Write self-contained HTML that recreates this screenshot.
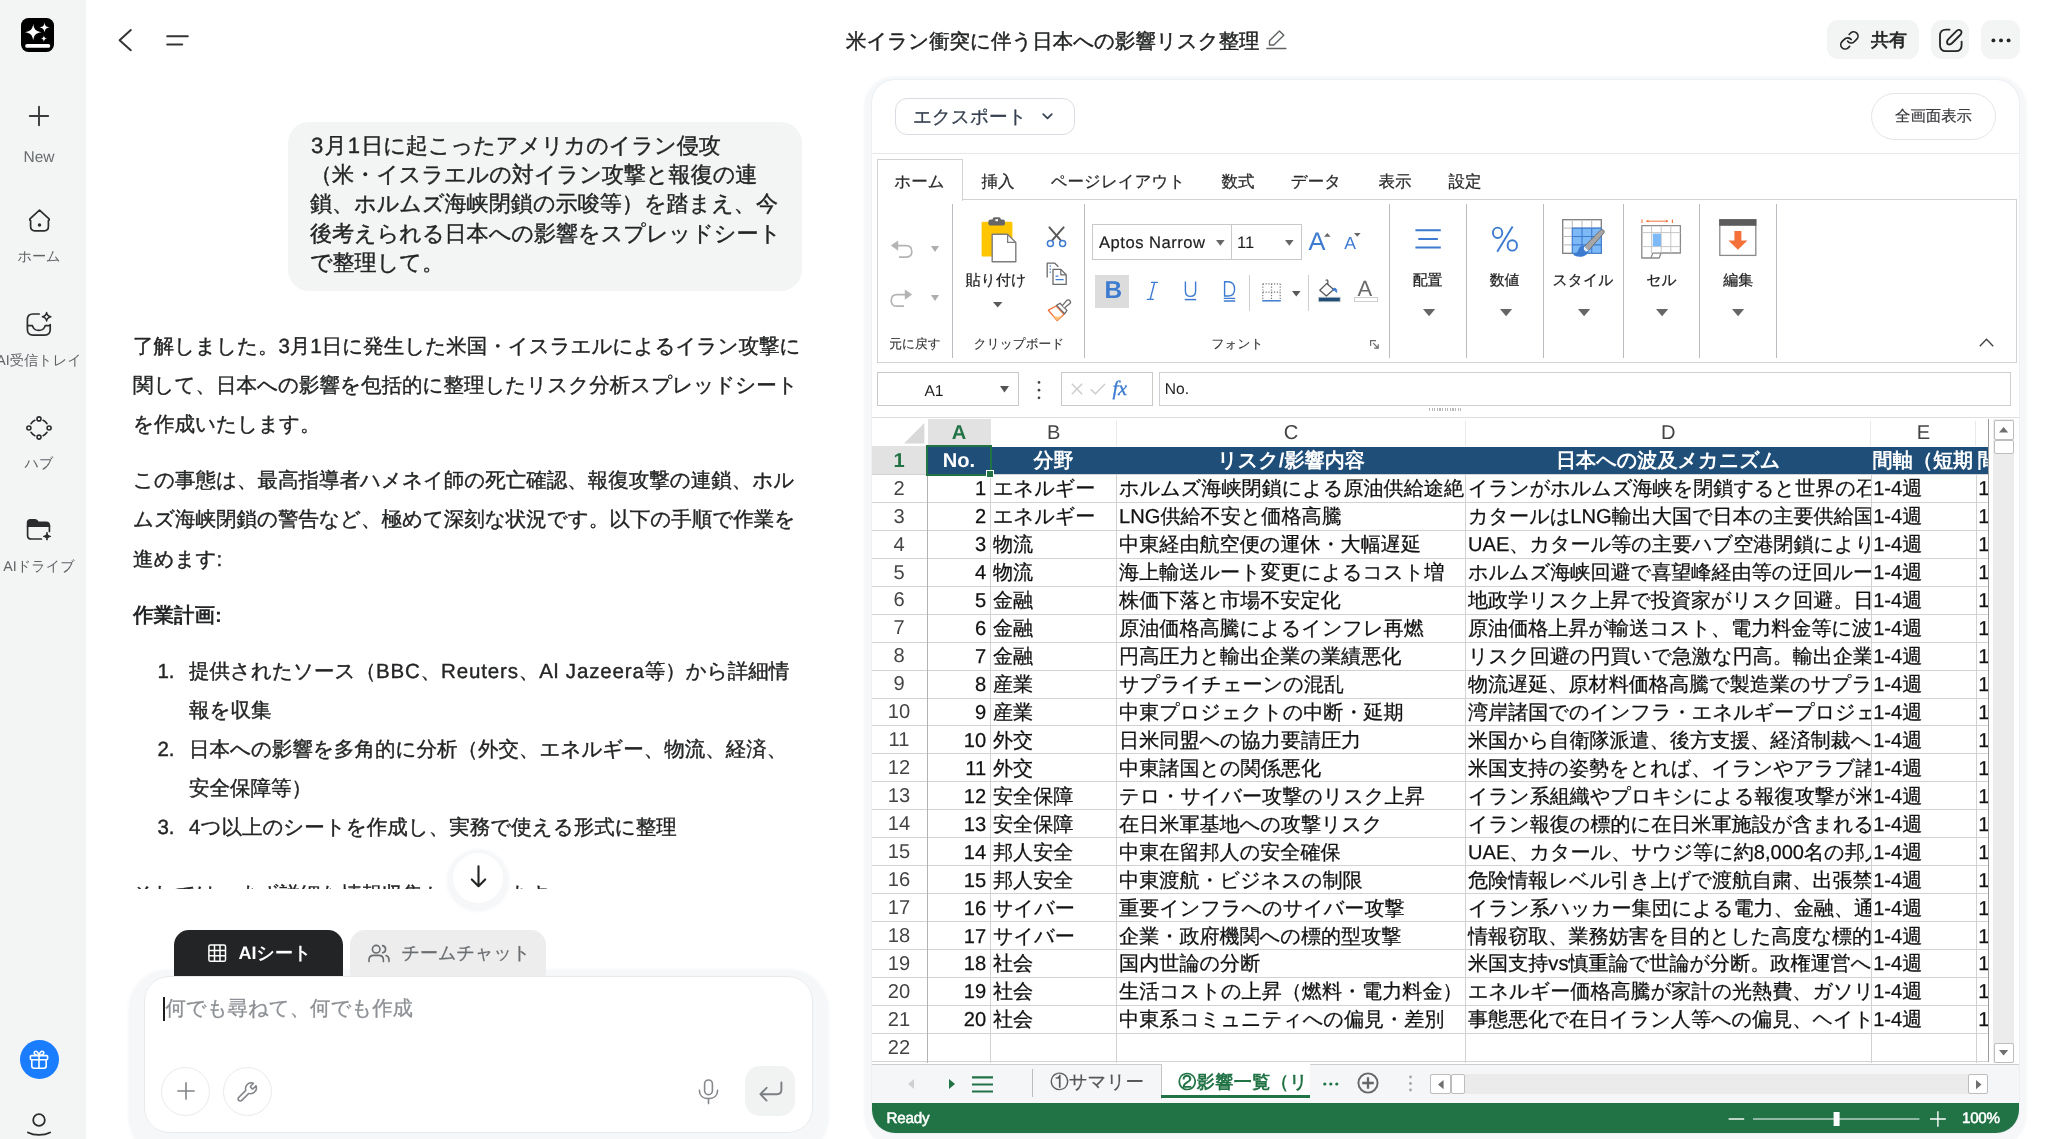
<!DOCTYPE html>
<html lang="ja">
<head>
<meta charset="utf-8">
<title>米イラン衝突に伴う日本への影響リスク整理</title>
<style>
*{box-sizing:border-box;margin:0;padding:0}
html,body{width:2048px;height:1139px;overflow:hidden;background:#fff}
body{font-family:"Liberation Sans",sans-serif;color:#232425;position:relative;-webkit-font-smoothing:antialiased;text-rendering:geometricPrecision}
#app{position:absolute;left:0;top:0;width:2048px;height:1139px;will-change:transform;overflow:hidden}
.abs{position:absolute}
.t{position:absolute;white-space:nowrap;line-height:1}
svg{position:absolute;overflow:visible}
/* sidebar */
#side{position:absolute;left:0;top:0;width:85.6px;height:1139px;background:#f3f4f4}
.slab{position:absolute;left:-24px;width:126px;text-align:center;font-size:14.2px;color:#606366;white-space:nowrap;line-height:18px}
/* chat */
.dg{padding:0 1.15px}
.p,#ub{-webkit-text-stroke:0.38px #232425}
.lt{letter-spacing:0.85px}
.p{position:absolute;font-size:20.5px;line-height:39.1px;white-space:nowrap;color:#232425}
/* sheet */
#card{position:absolute;left:872px;top:80px;width:1147px;height:1053px;border-radius:23px;background:#fff;box-shadow:0 0 0 1px rgba(234,237,241,.8),0 4.5px 2.5px 8px rgba(246,247,249,1);overflow:hidden}
.c{position:absolute;transform:translateX(-50%);white-space:nowrap;line-height:1}
.rt{font-size:16.5px;line-height:20px;top:172px;color:#2a2a2a}
.vs{position:absolute;width:1.4px;background:#b9bdc1;top:204px;height:154px}
.gl{font-size:12.7px;line-height:16px;top:336px;color:#333}
.bl{font-size:14.9px;line-height:18px;top:272px;color:#222}
#title{-webkit-text-stroke:0.45px #232425}
.rt,.bl{-webkit-text-stroke:0.25px currentColor}
.gl{-webkit-text-stroke:0.15px currentColor}
#export{-webkit-text-stroke:0.3px #374151}
#fullscr{-webkit-text-stroke:0.2px #3a3c3f}
#grid{-webkit-text-stroke:0.25px currentColor}
#grid [style*="bold"],#grid .c{-webkit-text-stroke:0}
#teamchat{-webkit-text-stroke:0.25px #6a6d70}
#tab1{-webkit-text-stroke:0.2px #555}
</style>
</head>
<body>
<div id="app">

<!-- ================= SIDEBAR ================= -->
<div id="side">
  <!-- logo -->
  <svg style="left:21px;top:18px" width="33" height="34" viewBox="0 0 33 34">
    <rect x="0" y="0" width="33" height="34" rx="7.5" fill="#000"/>
    <path d="M12.2 5.8 C12.9 11.2 14.6 13.4 20.6 14.2 C14.6 15 12.9 17.2 12.2 22.6 C11.5 17.2 9.8 15 3.8 14.2 C9.8 13.4 11.5 11.2 12.2 5.8Z" fill="#fff"/>
    <path d="M23.5 4.2 C23.9 7.6 24.9 8.8 28.6 9.4 C24.9 10 23.9 11.2 23.5 14.6 C23.1 11.2 22.1 10 18.4 9.4 C22.1 8.8 23.1 7.6 23.5 4.2Z" fill="#fff"/>
    <path d="M22.9 17.2 C23.2 19.4 23.8 20.1 26.2 20.5 C23.8 20.9 23.2 21.6 22.9 23.8 C22.6 21.6 22 20.9 19.6 20.5 C22 20.1 22.6 19.4 22.9 17.2Z" fill="#fff"/>
    <rect x="4.2" y="25.9" width="25" height="3.9" rx="1.9" fill="#fff"/>
  </svg>
  <!-- plus -->
  <svg style="left:29px;top:106px" width="20" height="20" viewBox="0 0 20 20" fill="none" stroke="#3a3b3d" stroke-width="1.9" stroke-linecap="round"><path d="M10 0.8V19.2M0.8 10H19.2"/></svg>
  <div class="slab" style="top:149px;font-size:15.5px;color:#6a6d70">New</div>
  <!-- home -->
  <svg style="left:28px;top:209px" width="23" height="23" viewBox="0 0 23 23" fill="none" stroke="#2b2c2e" stroke-width="1.7" stroke-linejoin="round" stroke-linecap="round">
    <path d="M2.2 9.6 L11.5 1.2 L20.8 9.6 C21.6 10.4 21.3 11.3 20.4 11.6 V17.6 C20.4 20.2 18.8 21.8 16.2 21.8 H6.8 C4.2 21.8 2.6 20.2 2.6 17.6 V11.6 C1.7 11.3 1.4 10.4 2.2 9.6Z"/>
    <circle cx="11.5" cy="16" r="0.9" fill="#2b2c2e"/>
  </svg>
  <div class="slab" style="top:248px">ホーム</div>
  <!-- inbox -->
  <svg style="left:26px;top:312px" width="26" height="25" viewBox="0 0 26 25" fill="none" stroke="#2b2c2e" stroke-width="1.7" stroke-linejoin="round" stroke-linecap="round">
    <path d="M13.2 2 H7 C3.4 2 1.4 4 1.4 7.6 V17.6 C1.4 21.2 3.4 23.2 7 23.2 H18.6 C22.2 23.2 24.2 21.2 24.2 17.6 V12.6"/>
    <path d="M1.6 13.6 H6.4 C7.2 16.6 9.4 18.4 12.8 18.4 C16.2 18.4 18.4 16.6 19.2 13.6 H24"/>
    <path d="M20.6 0.6 C21 3.4 21.8 4.2 24.8 4.8 C21.8 5.4 21 6.2 20.6 9 C20.2 6.2 19.4 5.4 16.4 4.8 C19.4 4.2 20.2 3.4 20.6 0.6Z" stroke-width="1.5"/>
  </svg>
  <div class="slab" style="top:352px">AI受信トレイ</div>
  <!-- hub -->
  <svg style="left:26.4px;top:415.6px" width="26" height="24" viewBox="0 0 26 24" fill="none" stroke="#2b2c2e" stroke-width="1.6" stroke-linecap="round">
    <circle cx="13" cy="2.9" r="2"/><circle cx="13" cy="21.1" r="2"/><circle cx="2.9" cy="12" r="2"/><circle cx="23.1" cy="12" r="2"/>
    <path d="M8.9 4.3 C7.3 5.1 6 6.2 5 7.7M17.1 4.3 C18.7 5.1 20 6.2 21 7.7M5 16.3 C6 17.8 7.3 18.9 8.9 19.7M21 16.3 C20 17.8 18.7 18.9 17.1 19.7"/>
  </svg>
  <div class="slab" style="top:455px">ハブ</div>
  <!-- drive -->
  <svg style="left:26px;top:518px" width="26" height="24" viewBox="0 0 26 24" fill="none" stroke="#2b2c2e" stroke-width="1.7" stroke-linejoin="round" stroke-linecap="round">
    <path d="M1.6 6.2 V4.6 C1.6 2.8 2.6 1.8 4.4 1.8 H9 C10 1.8 10.6 2.2 11.2 3 L12.2 4.4 H20 C22.2 4.4 23.4 5.6 23.4 7.8 V8.2 H1.6Z" fill="#2b2c2e"/>
    <path d="M1.6 8 V17.4 C1.6 19.8 2.8 21 5.2 21 H15.4M23.4 8 V13.4"/>
    <path d="M21 14.6 C21.4 17.2 22 17.8 24.8 18.4 C22 19 21.4 19.6 21 22.2 C20.6 19.6 20 19 17.2 18.4 C20 17.8 20.6 17.2 21 14.6Z" fill="#2b2c2e" stroke-width="1"/>
  </svg>
  <div class="slab" style="top:558px">AIドライブ</div>
  <!-- gift -->
  <div class="abs" style="left:19.8px;top:1039.9px;width:39px;height:39px;border-radius:50%;background:#1a7dff"></div>
  <svg style="left:29px;top:1048.8px" width="20" height="21" viewBox="0 0 20 21" fill="none" stroke="#fff" stroke-width="1.6" stroke-linejoin="round" stroke-linecap="round">
    <rect x="1.4" y="6.6" width="17.2" height="4.2" rx="1"/>
    <path d="M2.8 10.8 V16.8 C2.8 18.4 3.6 19.2 5.2 19.2 H14.8 C16.4 19.2 17.2 18.4 17.2 16.8 V10.8M10 6.6 V19.2"/>
    <path d="M10 6.4 C8.6 6.4 5.2 6.2 5.2 3.8 C5.2 1.6 8.6 1.2 10 6.4 C11.4 1.2 14.8 1.6 14.8 3.8 C14.8 6.2 11.4 6.4 10 6.4Z"/>
  </svg>
  <!-- user -->
  <svg style="left:27px;top:1112px" width="24" height="27" viewBox="0 0 24 27" fill="none" stroke="#2b2c2e" stroke-width="1.8" stroke-linecap="round">
    <circle cx="12" cy="8" r="5.8"/><path d="M0.9 20.5 C7 23.7 17 23.7 23.1 20.5"/>
  </svg>
</div>

<!-- ================= CHAT HEADER ================= -->
<svg style="left:118px;top:29px" width="14" height="22" viewBox="0 0 14 22" fill="none" stroke="#333435" stroke-width="2" stroke-linecap="round" stroke-linejoin="round"><path d="M12.8 1 L1.6 11.2 L12.8 21.2"/></svg>
<svg style="left:166px;top:35px" width="23" height="11" viewBox="0 0 23 11" fill="none" stroke="#333435" stroke-width="2" stroke-linecap="round"><path d="M1.2 1.3 H21.8M1.2 9.5 H16.2"/></svg>

<!-- user bubble -->
<div class="abs" style="left:288px;top:121.6px;width:514px;height:169px;border-radius:21px;background:#f3f4f4"></div>
<div class="abs ub" style="left:309.9px;top:130.7px;font-size:22.1px;line-height:29.3px;white-space:nowrap;color:#232425" id="ub"><span class="dg">3</span>月<span class="dg">1</span>日に起こったアメリカのイラン侵攻<br>（米・イスラエルの対イラン攻撃と報復の連<br>鎖、ホルムズ海峡閉鎖の示唆等）を踏まえ、今<br>後考えられる日本への影響をスプレッドシート<br>で整理して。</div>
<!-- assistant text -->
<div id="scroll" style="position:absolute;left:100px;top:300px;width:740px;height:589.4px;overflow:hidden">
<div class="p" style="left:33px;top:26.6px" id="p1">了解しました。3月1日に発生した米国・イスラエルによるイラン攻撃に<br>関して、日本への影響を包括的に整理したリスク分析スプレッドシート<br>を作成いたします。</div>
<div class="p" style="left:33px;top:161.4px" id="p2">この事態は、最高指導者ハメネイ師の死亡確認、報復攻撃の連鎖、ホル<br>ムズ海峡閉鎖の警告など、極めて深刻な状況です。以下の手順で作業を<br>進めます:</div>
<div class="p" style="left:33px;top:295.6px;font-weight:bold;-webkit-text-stroke:0" id="h1">作業計画:</div>
<div class="p" style="left:57.4px;top:351.7px">1.<br><br>2.<br><br>3.</div>
<div class="p" style="left:89px;top:351.7px" id="ol">提供されたソース（<span class="lt">BBC</span>、<span class="lt">Reuters</span>、<span class="lt">Al Jazeera</span>等）から詳細情<br>報を収集<br>日本への影響を多角的に分析（外交、エネルギー、物流、経済、<br>安全保障等）<br>4つ以上のシートを作成し、実務で使える形式に整理</div>
<div class="p" style="left:33px;top:574.8px" id="p3">それでは、まず詳細な情報収集から始めます。</div>
</div>
<!-- scroll-down button -->
<div class="abs" style="left:453px;top:852.6px;width:50px;height:50px;border-radius:50%;background:#fff;box-shadow:0 2.5px 3px 6.5px rgba(246,247,249,1)"></div>
<svg style="left:469.6px;top:865.4px" width="17" height="23" viewBox="0 0 17 23" fill="none" stroke="#232425" stroke-width="2.1" stroke-linecap="round" stroke-linejoin="round"><path d="M8.5 1.2 V21M1.8 14.4 L8.5 21.2 L15.2 14.4"/></svg>


<div class="abs" style="left:143.6px;top:976.2px;width:669.2px;height:157.2px;border-radius:25px;box-shadow:0 9px 3px 15.5px rgba(246,247,249,1)"></div>
<!-- input tabs -->
<div class="abs" style="left:174.4px;top:930px;width:168.6px;height:60px;border-radius:15px 15px 0 0;background:#232425"></div>
<svg style="left:207.6px;top:944.2px" width="18.4" height="18.2" viewBox="0 0 18.4 18.2" fill="none" stroke="#fff" stroke-width="1.5"><rect x="0.9" y="0.9" width="16.6" height="16.4" rx="1.6"/><path d="M0.9 6.4 H17.5M0.9 11.8 H17.5M6.5 0.9 V17.3M12 0.9 V17.3"/></svg>
<div class="t" style="left:238.6px;top:943.4px;font-size:18px;line-height:20px;color:#fff;font-weight:bold" id="aisheet">AIシート</div>
<div class="abs" style="left:349.6px;top:930px;width:196.2px;height:60px;border-radius:15px 15px 0 0;background:#ededed"></div>
<svg style="left:368.4px;top:944px" width="22" height="19" viewBox="0 0 22 19" fill="none" stroke="#6a6d70" stroke-width="1.6" stroke-linecap="round" stroke-linejoin="round">
  <circle cx="8.2" cy="5.2" r="3.8"/><path d="M1 17.6 V15.8 C1 13 3 11.4 5.8 11.4 H10.6 C13.4 11.4 15.4 13 15.4 15.8 V17.6"/>
  <path d="M14.6 1.6 C16.4 2 17.6 3.4 17.6 5.2 C17.6 7 16.4 8.4 14.6 8.8M21 17.6 V15.8 C21 13.6 19.8 12.2 18 11.6"/>
</svg>
<div class="t" style="left:401.4px;top:943.4px;font-size:18.1px;line-height:20px;color:#6a6d70" id="teamchat">チームチャット</div>
<!-- input box -->
<div class="abs" style="left:143.6px;top:976.2px;width:669.2px;height:157.2px;border-radius:25px;background:#fff;border:1px solid #e7e9ec"></div>
<div class="abs" style="left:163px;top:997px;width:2.2px;height:24.4px;background:#1c1d1e"></div>
<div class="t" style="left:165.4px;top:997.4px;font-size:20.4px;line-height:24px;color:#8d9094;-webkit-text-stroke:0.3px #8d9094" id="ph">何でも尋ねて、何でも作成</div>
<div class="abs" style="left:161.4px;top:1066.8px;width:49px;height:49px;border-radius:50%;border:1px solid #e9eaec;background:#fff"></div>
<svg style="left:176.8px;top:1082.2px" width="18" height="18" viewBox="0 0 18 18" fill="none" stroke="#808387" stroke-width="1.6" stroke-linecap="round"><path d="M9 0.9 V17.1M0.9 9 H17.1"/></svg>
<div class="abs" style="left:223px;top:1066.8px;width:49px;height:49px;border-radius:50%;border:1px solid #e9eaec;background:#fff"></div>
<svg style="left:237.4px;top:1080.8px" width="21" height="21" viewBox="0 0 21 21" fill="none" stroke="#808387" stroke-width="1.5" stroke-linecap="round" stroke-linejoin="round">
  <path d="M13.6 5.2 C13.4 5.6 13.4 6 13.8 6.4 L15 7.6 C15.4 8 15.8 8 16.2 7.6 L19 4.8 C19.8 7 19.4 9.4 17.6 11 C16 12.6 13.8 13 11.8 12.4 L4.8 19.4 C4 20.2 2.6 20.2 1.8 19.4 C1 18.6 1 17.2 1.8 16.4 L8.8 9.4 C8.2 7.4 8.6 5.2 10.2 3.6 C11.8 1.8 14.2 1.4 16.4 2.2 Z"/>
</svg>
<svg style="left:698.4px;top:1078.6px" width="21" height="26" viewBox="0 0 21 26" fill="none" stroke="#85888c" stroke-width="1.6" stroke-linecap="round" stroke-linejoin="round">
  <rect x="6.6" y="1" width="7.8" height="14.6" rx="3.9"/><path d="M1.4 11.4 C1.4 16.4 5 19.6 10.5 19.6 C16 19.6 19.6 16.4 19.6 11.4M10.5 19.8 V24.6"/>
</svg>
<div class="abs" style="left:745px;top:1066.4px;width:50px;height:50px;border-radius:15px;background:#f1f2f2"></div>
<svg style="left:758.6px;top:1081.4px" width="24" height="21" viewBox="0 0 24 21" fill="none" stroke="#7b7e82" stroke-width="1.9" stroke-linecap="round" stroke-linejoin="round"><path d="M22.4 1.4 V8.8 C22.4 11.6 20.8 13.2 18 13.2 H2M7.6 6.8 L1.4 13.2 L7.6 19.6"/></svg>


<!-- ================= RIGHT HEADER ================= -->
<div class="t" style="left:846px;top:29.8px;font-size:20.45px;line-height:24px;color:#232425;letter-spacing:0px" id="title">米イラン衝突に伴う日本への影響リスク整理</div>
<svg style="left:1266px;top:30px" width="21" height="20" viewBox="0 0 21 20" fill="none" stroke="#5f6265" stroke-width="1.4" stroke-linejoin="round" stroke-linecap="round">
  <path d="M13.4 1 L17.8 5.3 L7.8 15 H3.5 V10.8 Z"/><path d="M0.9 18.4 H19.8" stroke-width="1.5"/>
</svg>
<div class="abs" style="left:1827px;top:20px;width:92px;height:39px;border-radius:11px;background:#f3f4f4"></div>
<svg style="left:1839px;top:30.2px" width="20.8" height="20.8" viewBox="0 0 24 24" fill="none" stroke="#232425" stroke-width="1.95" stroke-linecap="round" stroke-linejoin="round"><path d="M10 13a5 5 0 0 0 7.54.54l3-3a5 5 0 0 0-7.07-7.07l-1.72 1.71"/><path d="M14 11a5 5 0 0 0-7.54-.54l-3 3a5 5 0 0 0 7.07 7.07l1.71-1.71"/></svg>
<div class="t" style="left:1871px;top:30.4px;font-size:18px;line-height:20px;color:#232425;-webkit-text-stroke:0.7px #232425">共有</div>
<div class="abs" style="left:1931px;top:20px;width:38.4px;height:39px;border-radius:11px;background:#f3f4f4"></div>
<svg style="left:1937.8px;top:27.4px" width="26" height="26" viewBox="0 0 26 26" fill="none" stroke="#232425" stroke-width="1.8" stroke-linecap="round" stroke-linejoin="round">
  <path d="M11.6 2.6 H8 C4.2 2.6 2 4.8 2 8.6 V18.2 C2 22 4.2 24.2 8 24.2 H17.6 C21.4 24.2 23.6 22 23.6 18.2 V14.6"/>
  <path d="M9.6 17 C8.6 15.4 9.2 13.4 10.4 12.2 L18.4 4.2 C19.8 2.8 21.6 2.4 22.8 3.6 C24 4.8 23.6 6.6 22.2 8 L14.2 16 C13 17.2 11 17.8 9.6 17Z"/>
</svg>
<div class="abs" style="left:1981px;top:20px;width:39px;height:39px;border-radius:11px;background:#f3f4f4"></div>
<svg style="left:1991px;top:37px" width="20" height="6" viewBox="0 0 20 6"><circle cx="2.4" cy="3.4" r="1.95" fill="#232425"/><circle cx="10" cy="3.4" r="1.95" fill="#232425"/><circle cx="17.6" cy="3.4" r="1.95" fill="#232425"/></svg>


<!-- ================= SHEET CARD ================= -->
<div id="card"><div id="cw" style="position:absolute;left:-872px;top:-80px;width:2048px;height:1139px">
<!-- card top -->
<div class="abs" style="left:895px;top:98px;width:180px;height:37px;border:1px solid #d9dde3;border-radius:12px"></div>
<div class="t" style="left:913px;top:107px;font-size:18.6px;line-height:20px;color:#374151" id="export">エクスポート</div>
<svg style="left:1042px;top:113px" width="11" height="7" viewBox="0 0 11 7" fill="none" stroke="#374151" stroke-width="1.7" stroke-linecap="round" stroke-linejoin="round"><path d="M1.2 1.2 L5.5 5.4 L9.8 1.2"/></svg>
<div class="abs" style="left:1871px;top:93px;width:125px;height:47px;border:1px solid #e2e4e7;border-radius:24px"></div>
<div class="t" style="left:1895px;top:109px;font-size:15.4px;line-height:16px;color:#3a3c3f" id="fullscr">全画面表示</div>
<div class="abs" style="left:872px;top:153px;width:1147px;height:1px;background:#e6e8eb"></div>
<!-- ribbon tabs -->
<div class="abs" style="left:876.6px;top:158.9px;width:86.2px;height:41.7px;border:1.2px solid #d2d2d2;border-bottom:none;background:#fff"></div>
<div class="abs" style="left:961.6px;top:198.6px;width:1055px;height:1.2px;background:#d2d2d2"></div>
<div class="abs" style="left:876.6px;top:199px;width:1.2px;height:164px;background:#d2d2d2"></div>
<div class="abs" style="left:876.6px;top:361.8px;width:1140.2px;height:1.2px;background:#d2d2d2"></div>
<div class="abs" style="left:2015.6px;top:199px;width:1.2px;height:164px;background:#d2d2d2"></div>
<div class="c rt" style="left:919.5px">ホーム</div>
<div class="c rt" style="left:998px">挿入</div>
<div class="c rt" style="left:1118px">ページレイアウト</div>
<div class="c rt" style="left:1238px">数式</div>
<div class="c rt" style="left:1316px">データ</div>
<div class="c rt" style="left:1395px">表示</div>
<div class="c rt" style="left:1465px">設定</div>
<!-- group separators -->
<div class="vs" style="left:952px"></div><div class="vs" style="left:1084px"></div><div class="vs" style="left:1389px"></div>
<div class="vs" style="left:1466px"></div><div class="vs" style="left:1542.6px"></div><div class="vs" style="left:1622.5px"></div>
<div class="vs" style="left:1699px"></div><div class="vs" style="left:1776px"></div>
<!-- undo group -->
<svg style="left:890px;top:238px" width="24" height="21" viewBox="0 0 24 21" fill="none" stroke="#b4b4b4" stroke-width="1.7"><path d="M7 7.6 H16 C19.6 7.6 21.8 9.8 21.8 13.4 C21.8 17 19.6 19.2 16 19.2 H9"/><path d="M0.8 7.6 L8.2 2.4 V12.8Z" fill="#b4b4b4" stroke="none"/></svg>
<svg style="left:930.6px;top:246.4px" width="8" height="6" viewBox="0 0 8 6"><path d="M0 0 H8 L4 6Z" fill="#adadad"/></svg>
<svg style="left:889px;top:287px" width="24" height="21" viewBox="0 0 24 21" fill="none" stroke="#b4b4b4" stroke-width="1.7"><path d="M17 7.6 H8 C4.4 7.6 2.2 9.8 2.2 13.4 C2.2 17 4.4 19.2 8 19.2 H15"/><path d="M23.2 7.6 L15.8 2.4 V12.8Z" fill="#b4b4b4" stroke="none"/></svg>
<svg style="left:930.6px;top:295.4px" width="8" height="6" viewBox="0 0 8 6"><path d="M0 0 H8 L4 6Z" fill="#adadad"/></svg>
<div class="c gl" style="left:915px">元に戻す</div>
<!-- clipboard group -->
<svg style="left:980px;top:216px" width="38" height="48" viewBox="0 0 38 48">
  <rect x="1.6" y="5.8" width="30.8" height="34.6" rx="1.2" fill="#ffc600"/>
  <rect x="8.4" y="3.6" width="16.6" height="6" rx="2.2" fill="#666"/><rect x="12.6" y="1.2" width="8.2" height="5" rx="2" fill="#666"/><rect x="15.4" y="3.2" width="2.6" height="2" fill="#fff"/>
  <path d="M12.2 18.2 H27.6 L35.8 26.4 V45.8 H12.2Z" fill="#fff" stroke="#7d7d7d" stroke-width="1.4" stroke-linejoin="round"/>
  <path d="M27.6 18.4 V26.4 H35.6" fill="none" stroke="#7d7d7d" stroke-width="1.3"/>
</svg>
<div class="c bl" style="left:996px">貼り付け</div>
<svg style="left:992.8px;top:302px" width="9.4" height="5.6" viewBox="0 0 9.4 5.6"><path d="M0 0 H9.4 L4.7 5.6Z" fill="#595959"/></svg>
<!-- scissors -->
<svg style="left:1046px;top:226px" width="21" height="22" viewBox="0 0 21 22" fill="none">
  <path d="M3.4 1.4 L14.6 14.2M17.6 1.4 L6.4 14.2" stroke="#5a5a5a" stroke-width="2" stroke-linecap="round"/>
  <circle cx="4.4" cy="17.4" r="3" stroke="#3c7bd0" stroke-width="1.5"/><circle cx="16.6" cy="17.4" r="3" stroke="#3c7bd0" stroke-width="1.5"/>
</svg>
<!-- copy -->
<svg style="left:1045.5px;top:261.5px" width="22" height="24" viewBox="0 0 22 24" fill="none" stroke-linejoin="round">
  <path d="M1.2 15.6 V1.2 H8.8 L12.4 4.8" stroke="#6b6b6b" stroke-width="1.3"/>
  <path d="M3.6 4.2 H5M3.6 7.2 H5M3.6 10.2 H5" stroke="#3c7bd0" stroke-width="1.2"/>
  <path d="M7 7.4 H14.8 L20.2 12.8 V22.4 H7Z" fill="#fff" stroke="#6b6b6b" stroke-width="1.3"/>
  <path d="M14.8 7.6 V12.8 H20" stroke="#6b6b6b" stroke-width="1.2"/>
  <path d="M9.6 14.2 H12.4M9.6 17.6 H17.6" stroke="#3c7bd0" stroke-width="1.3"/>
</svg>
<!-- format painter -->
<svg style="left:1047px;top:299px" width="25" height="23" viewBox="0 0 25 23" fill="none" stroke-linejoin="round">
  <path d="M1.4 11.2 L9.2 7 L17 15.2 L10.2 21.6 Z" fill="#fff" stroke="#f0733c" stroke-width="1.4"/>
  <path d="M5.4 16 L10.2 21.4 L15.6 16.4 C12 18.2 8.4 18 5.4 16Z" fill="#ffc27a" stroke="none"/>
  <path d="M9.6 6.4 L13 4.2 L20 11.4 L17.6 14.8Z" fill="#fff" stroke="#6b6b6b" stroke-width="1.3"/>
  <path d="M15.4 6.6 L19.6 1.6 C20.6 0.6 22.2 0.8 23 1.8 C23.8 2.8 23.6 4 22.6 4.8 L17.6 8.8" fill="#fff" stroke="#6b6b6b" stroke-width="1.3"/>
</svg>
<div class="c gl" style="left:1019px">クリップボード</div>
<!-- font group -->
<div class="abs" style="left:1092px;top:224.4px;width:210.4px;height:36px;border:1.4px solid #c9c9c9;background:#fff"></div>
<div class="abs" style="left:1230.6px;top:224.4px;width:1.4px;height:36px;background:#c9c9c9"></div>
<div class="t" style="left:1099px;top:233px;font-size:16.6px;line-height:20px;color:#1e1e1e;letter-spacing:0.5px;-webkit-text-stroke:0.2px #1e1e1e" id="fname">Aptos Narrow</div>
<svg style="left:1216.4px;top:240.4px" width="8.6" height="5.8" viewBox="0 0 8.6 5.8"><path d="M0 0 H8.6 L4.3 5.8Z" fill="#666"/></svg>
<div class="t" style="left:1237px;top:233px;font-size:16.6px;line-height:20px;color:#1e1e1e" id="fsize">11</div>
<svg style="left:1284.8px;top:240.4px" width="8.6" height="5.8" viewBox="0 0 8.6 5.8"><path d="M0 0 H8.6 L4.3 5.8Z" fill="#666"/></svg>
<div class="t" style="left:1308.6px;top:227px;font-size:25.4px;line-height:30px;color:#3c7bd0" id="growA">A</div>
<svg style="left:1323.6px;top:233px" width="6.6" height="3.8" viewBox="0 0 6.6 3.8"><path d="M0 3.8 H6.6 L3.3 0Z" fill="#666"/></svg>
<div class="t" style="left:1344.2px;top:232.4px;font-size:17.6px;line-height:22px;color:#3c7bd0" id="shrinkA">A</div>
<svg style="left:1354.4px;top:232.8px" width="6.6" height="3.8" viewBox="0 0 6.6 3.8"><path d="M0 0 H6.6 L3.3 3.8Z" fill="#666"/></svg>
<div class="abs" style="left:1095.4px;top:274.8px;width:33.4px;height:33px;background:#dcdcdc"></div>
<div class="t" style="left:1104.6px;top:276.4px;font-size:24.4px;line-height:30px;color:#3c7bd0;font-weight:bold" id="boldB">B</div>
<svg style="left:1146px;top:281px" width="13" height="20" viewBox="0 0 13 20" fill="none" stroke="#3c7bd0" stroke-width="1.4" stroke-linecap="round"><path d="M8.6 1.4 L4.2 18.4M5.6 1.4 H11.4M1.4 18.4 H7.2"/></svg>
<svg style="left:1184px;top:281px" width="13" height="20" viewBox="0 0 13 20" fill="none" stroke="#3c7bd0" stroke-width="1.4"><path d="M1.4 0.6 V10 C1.4 13.6 3.2 15.4 6.5 15.4 C9.8 15.4 11.6 13.6 11.6 10 V0.6"/><path d="M0.8 18.6 H12.2" stroke-width="1.5"/></svg>
<svg style="left:1223px;top:281px" width="13" height="21" viewBox="0 0 13 21" fill="none" stroke="#3c7bd0" stroke-width="1.4"><path d="M1.6 0.8 V15 H5 C9.4 15 11.6 12.4 11.6 7.9 C11.6 3.4 9.4 0.8 5 0.8Z"/><path d="M0.8 17.4 H12.2M0.8 20 H12.2" stroke-width="1.3"/></svg>
<div class="abs" style="left:1249.2px;top:274.8px;width:1.3px;height:36px;background:#cfcfcf"></div>
<svg style="left:1261.6px;top:282.6px" width="19" height="19" viewBox="0 0 19 19" fill="none"><path d="M0.8 0.8 H18.2 M0.8 9.2 H18.2 M0.8 0.8 V17 M9.5 0.8 V17 M18.2 0.8 V17" stroke="#7a7a7a" stroke-width="1.2" stroke-dasharray="1.2 1.6"/><path d="M0.2 17.8 H18.8" stroke="#3c7bd0" stroke-width="1.5"/></svg>
<svg style="left:1291.6px;top:290.6px" width="8.6" height="5.6" viewBox="0 0 8.6 5.6"><path d="M0 0 H8.6 L4.3 5.6Z" fill="#595959"/></svg>
<div class="abs" style="left:1307.9px;top:274.8px;width:1.3px;height:36px;background:#cfcfcf"></div>
<svg style="left:1318px;top:279px" width="23" height="24" viewBox="0 0 23 24" fill="none">
  <path d="M8 1.8 C8 0.6 9.8 0.6 9.8 1.8 V8.6" stroke="#5a5a5a" stroke-width="1.3"/>
  <path d="M8.8 4.4 L1.8 11.2 L8.4 17 L15.6 10.6 Z" fill="#fff" stroke="#5a5a5a" stroke-width="1.3" stroke-linejoin="round"/>
  <path d="M15.4 9.6 C17.6 8.6 19.2 10.2 18.6 13.4 C17.4 11.6 16.4 11.2 14.6 11.4Z" fill="#3c7bd0" stroke="#3c7bd0" stroke-width="1"/>
  <rect x="0.6" y="18.2" width="21.6" height="4.6" fill="#1f4e79" stroke="#d0d0d0" stroke-width="0.8"/>
</svg>
<div class="t" style="left:1357.6px;top:274.6px;font-size:22px;line-height:28px;color:#6a6a6a" id="fcolA">A</div>
<div class="abs" style="left:1354.2px;top:296.6px;width:23.4px;height:5.4px;background:#fff;border:1px solid #cfcfcf"></div>
<div class="c gl" style="left:1237.6px">フォント</div>
<svg style="left:1370.4px;top:339.8px" width="9" height="9" viewBox="0 0 9 9" fill="none" stroke="#6a6a6a" stroke-width="1.2"><path d="M0.6 6 V0.6 H6"/><path d="M3.2 3.2 L8 8M8.2 4.2 V8.2 H4.2" /></svg>
<!-- big groups -->
<svg style="left:1415px;top:229px" width="27" height="20" viewBox="0 0 27 20" stroke="#3c7bd0" stroke-width="2"><path d="M0.4 1.3 H25.8M3.3 10 H22.9M0.4 18.5 H25.8"/></svg>
<div class="c bl" style="left:1427.6px">配置</div>
<svg class="ba" style="left:1422.6px;top:309.4px" width="12.2" height="7.2" viewBox="0 0 12.2 7.2"><path d="M0 0 H12.2 L6.1 7.2Z" fill="#666"/></svg>
<svg style="left:1490px;top:225px" width="30" height="29" viewBox="0 0 30 29" fill="none" stroke="#3c7bd0" stroke-width="1.9"><ellipse cx="7.6" cy="7.8" rx="4.7" ry="5.2"/><ellipse cx="22.3" cy="20.4" rx="4.7" ry="5.2"/><path d="M22.6 1.6 L7.2 26.8"/></svg>
<div class="c bl" style="left:1504.6px">数値</div>
<svg class="ba" style="left:1499.6px;top:309.4px" width="12.2" height="7.2" viewBox="0 0 12.2 7.2"><path d="M0 0 H12.2 L6.1 7.2Z" fill="#666"/></svg>
<!-- style icon -->
<svg style="left:1561.6px;top:219px" width="44" height="40" viewBox="0 0 44 40" fill="none">
  <rect x="0.7" y="0.7" width="38.6" height="33.6" fill="#fff" stroke="#7d7d7d" stroke-width="1.3"/>
  <path d="M10.3 0.7 V34.3M20 0.7 V34.3M29.7 0.7 V34.3M0.7 9.1 H39.3M0.7 17.5 H39.3M0.7 25.9 H39.3" stroke="#b9b9b9" stroke-width="1"/>
  <rect x="10.3" y="9.1" width="29" height="25.2" fill="#7db9f7"/>
  <path d="M20 9.1 V34.3M29.7 9.1 V34.3M10.3 17.5 H39.3M10.3 25.9 H39.3M10.3 9.1 H39.3V34.3H10.3Z" stroke="#3c7bd0" stroke-width="1.1"/>
  <path d="M41.6 11.2 C42.6 12.2 42.2 13.6 41.2 14.8 L26.6 31.6 L22.2 27.6 L37.8 11.8 C39 10.6 40.6 10.2 41.6 11.2Z" fill="#a6a6a6" stroke="#6f6f6f" stroke-width="1"/>
  <path d="M22.4 27.2 C20 26 17.4 27.4 16.6 30.2 C15.8 33 13.6 35 10.8 35.6 C14.8 38.6 21 38.6 24.6 35.4 C27 33.2 27 30.4 26.6 31.2Z" fill="#3c7bd0"/>
  <path d="M22.6 27.6 C21.2 29 21.6 31.6 24.4 32.8 C26.2 31.8 26.8 31.2 26.6 31.4 Z" fill="#fff" opacity=".85"/>
</svg>
<div class="c bl" style="left:1583px">スタイル</div>
<svg class="ba" style="left:1577.6px;top:309.4px" width="12.2" height="7.2" viewBox="0 0 12.2 7.2"><path d="M0 0 H12.2 L6.1 7.2Z" fill="#666"/></svg>
<!-- cell icon -->
<svg style="left:1641.4px;top:218px" width="41" height="42" viewBox="0 0 41 42" fill="none">
  <path d="M1 1.4 V5M31.4 1.4 V5" stroke="#f0733c" stroke-width="1.1"/><path d="M5.4 3.2 H27" stroke="#f0733c" stroke-width="1"/><path d="M5 3.2 L7.4 1.8 V4.6Z M27.4 3.2 L25 1.8 V4.6Z" fill="#f0733c"/>
  <path d="M0.8 7.6 H39.4 V35 H20 L18.2 40 H0.8Z" fill="#fff" stroke="#8a8a8a" stroke-width="1.3" stroke-linejoin="round"/>
  <path d="M10.6 7.6 V35.4M20.2 7.6 V35M29.8 7.6 V35M0.8 14.6 H39.4M0.8 28.6 H39.4" stroke="#c6c6c6" stroke-width="1"/>
  <rect x="11.8" y="15.6" width="8.2" height="12.6" fill="#7db9f7"/>
  <path d="M9.8 40 L11.8 35.2 H20" stroke="#8a8a8a" stroke-width="1.2"/>
</svg>
<div class="c bl" style="left:1661.5px">セル</div>
<svg class="ba" style="left:1655.8px;top:309.4px" width="12.2" height="7.2" viewBox="0 0 12.2 7.2"><path d="M0 0 H12.2 L6.1 7.2Z" fill="#666"/></svg>
<!-- edit icon -->
<svg style="left:1719.4px;top:219px" width="38" height="38" viewBox="0 0 38 38" fill="none">
  <rect x="0.8" y="0.8" width="36" height="35.6" fill="#fff" stroke="#8a8a8a" stroke-width="1.3"/>
  <rect x="0.2" y="0.2" width="37.2" height="6.6" fill="#5c5c5c"/>
  <path d="M15.4 12 H22.4 V21.4 H28.4 L18.9 30.8 L9.4 21.4 H15.4Z" fill="#f4713a"/>
</svg>
<div class="c bl" style="left:1738.2px">編集</div>
<svg class="ba" style="left:1732.2px;top:309.4px" width="12.2" height="7.2" viewBox="0 0 12.2 7.2"><path d="M0 0 H12.2 L6.1 7.2Z" fill="#666"/></svg>
<svg style="left:1978.6px;top:337.6px" width="15" height="9" viewBox="0 0 15 9" fill="none" stroke="#444" stroke-width="1.4"><path d="M0.8 8.2 L7.5 1.2 L14.2 8.2"/></svg>

<!-- GRIDGEN-START -->
<!-- formula bar -->
<div class="abs" style="left:876.6px;top:372.4px;width:142.4px;height:33.8px;border:1.3px solid #c9c9c9;background:#fff"></div>
<div class="c" style="left:934px;top:382.8px;font-size:15.6px;line-height:18px;color:#1e1e1e">A1</div>
<svg style="left:999.8px;top:386.4px" width="9" height="6.6" viewBox="0 0 9 6.6"><path d="M0 0 H9 L4.5 6.6Z" fill="#555"/></svg>
<svg style="left:1037px;top:380px" width="4" height="20" viewBox="0 0 4 20" fill="#444"><circle cx="2" cy="2.4" r="1.35"/><circle cx="2" cy="10.2" r="1.35"/><circle cx="2" cy="17.8" r="1.35"/></svg>
<div class="abs" style="left:1061px;top:372.4px;width:92.4px;height:33.8px;border:1.3px solid #c9c9c9;background:#fff"></div>
<svg style="left:1071px;top:383.2px" width="12" height="12" viewBox="0 0 12 12" stroke="#cdcdcd" stroke-width="1.5" fill="none"><path d="M0.8 0.8 L11.2 11.2M11.2 0.8 L0.8 11.2"/></svg>
<svg style="left:1090.4px;top:383.4px" width="16" height="12" viewBox="0 0 16 12" stroke="#cdcdcd" stroke-width="1.5" fill="none"><path d="M0.8 6.4 L5.4 10.8 L15 1"/></svg>
<div class="t" style="left:1112.6px;top:378.4px;font-family:'Liberation Serif',serif;font-style:italic;font-size:20.5px;line-height:22px;color:#3c7bd0;letter-spacing:-0.2px;-webkit-text-stroke:0.35px #3c7bd0" id="fx">fx</div>
<div class="abs" style="left:1158.8px;top:372.4px;width:852.6px;height:33.8px;border:1.3px solid #cdd1d6;background:#fff"></div>
<div class="t" style="left:1164.8px;top:380.8px;font-size:15.6px;line-height:18px;color:#1e1e1e">No.</div>
<div class="abs" style="left:1429px;top:407.6px;width:33px;height:3.4px;background:repeating-linear-gradient(90deg,#b8b8b8 0 1.3px,transparent 1.3px 2.6px)"></div>
<div class="abs" style="left:872px;top:416.6px;width:1147px;height:1.4px;background:#dedede"></div>
<!-- grid -->
<div id="grid" style="position:absolute;left:0;top:0;width:2048px;height:1139px;font-size:20.1px;color:#111;white-space:nowrap">
<div class="abs" style="left:927.5px;top:419.4px;width:63.10000000000002px;height:27px;background:#e2e2e2"></div>
<div class="abs" style="left:927.5px;top:444.6px;width:63.10000000000002px;height:2.6px;background:#217346"></div>
<svg style="left:904px;top:422.6px" width="20.4" height="20.6" viewBox="0 0 20.4 20.6"><path d="M20.4 0 V20.6 H0Z" fill="#d9d9d9"/></svg>
<div class="c" style="left:959.0px;top:421.4px;line-height:24px;font-weight:bold;color:#217346">A</div>
<div class="c" style="left:1053.6px;top:421.4px;line-height:24px;color:#444">B</div>
<div class="c" style="left:1291.0px;top:421.4px;line-height:24px;color:#444">C</div>
<div class="c" style="left:1668.2px;top:421.4px;line-height:24px;color:#444">D</div>
<div class="c" style="left:1923.5px;top:421.4px;line-height:24px;color:#444">E</div>
<div class="abs" style="left:1116.0px;top:421px;width:1px;height:25px;background:#e9e9e9"></div>
<div class="abs" style="left:1464.9px;top:421px;width:1px;height:25px;background:#e9e9e9"></div>
<div class="abs" style="left:1870.4px;top:421px;width:1px;height:25px;background:#e9e9e9"></div>
<div class="abs" style="left:1975.4px;top:421px;width:1px;height:25px;background:#e9e9e9"></div>
<div class="abs" style="left:872px;top:446.4px;width:55.5px;height:27.958px;background:#e2e2e2"></div>
<div class="abs" style="left:927.5px;top:447.0px;width:1061.3px;height:26.70px;background:#1f4e79"></div>
<div class="abs" style="left:872px;top:473.86px;width:1116.8px;height:1px;background:#d2d2d2"></div>
<div class="abs" style="left:872px;top:501.82px;width:1116.8px;height:1px;background:#d2d2d2"></div>
<div class="abs" style="left:872px;top:529.77px;width:1116.8px;height:1px;background:#d2d2d2"></div>
<div class="abs" style="left:872px;top:557.73px;width:1116.8px;height:1px;background:#d2d2d2"></div>
<div class="abs" style="left:872px;top:585.69px;width:1116.8px;height:1px;background:#d2d2d2"></div>
<div class="abs" style="left:872px;top:613.65px;width:1116.8px;height:1px;background:#d2d2d2"></div>
<div class="abs" style="left:872px;top:641.61px;width:1116.8px;height:1px;background:#d2d2d2"></div>
<div class="abs" style="left:872px;top:669.56px;width:1116.8px;height:1px;background:#d2d2d2"></div>
<div class="abs" style="left:872px;top:697.52px;width:1116.8px;height:1px;background:#d2d2d2"></div>
<div class="abs" style="left:872px;top:725.48px;width:1116.8px;height:1px;background:#d2d2d2"></div>
<div class="abs" style="left:872px;top:753.44px;width:1116.8px;height:1px;background:#d2d2d2"></div>
<div class="abs" style="left:872px;top:781.40px;width:1116.8px;height:1px;background:#d2d2d2"></div>
<div class="abs" style="left:872px;top:809.35px;width:1116.8px;height:1px;background:#d2d2d2"></div>
<div class="abs" style="left:872px;top:837.31px;width:1116.8px;height:1px;background:#d2d2d2"></div>
<div class="abs" style="left:872px;top:865.27px;width:1116.8px;height:1px;background:#d2d2d2"></div>
<div class="abs" style="left:872px;top:893.23px;width:1116.8px;height:1px;background:#d2d2d2"></div>
<div class="abs" style="left:872px;top:921.19px;width:1116.8px;height:1px;background:#d2d2d2"></div>
<div class="abs" style="left:872px;top:949.14px;width:1116.8px;height:1px;background:#d2d2d2"></div>
<div class="abs" style="left:872px;top:977.10px;width:1116.8px;height:1px;background:#d2d2d2"></div>
<div class="abs" style="left:872px;top:1005.06px;width:1116.8px;height:1px;background:#d2d2d2"></div>
<div class="abs" style="left:872px;top:1033.02px;width:1116.8px;height:1px;background:#d2d2d2"></div>
<div class="abs" style="left:872px;top:1060.98px;width:1116.8px;height:1px;background:#d2d2d2"></div>
<div class="abs" style="left:927.00px;top:446.40px;width:1px;height:616.20px;background:#b4b4b4"></div>
<div class="abs" style="left:990.10px;top:474.36px;width:1px;height:588.24px;background:#d2d2d2"></div>
<div class="abs" style="left:1116.10px;top:474.36px;width:1px;height:588.24px;background:#d2d2d2"></div>
<div class="abs" style="left:1465.00px;top:474.36px;width:1px;height:588.24px;background:#d2d2d2"></div>
<div class="abs" style="left:1870.50px;top:474.36px;width:1px;height:588.24px;background:#d2d2d2"></div>
<div class="abs" style="left:1975.50px;top:474.36px;width:1px;height:588.24px;background:#d2d2d2"></div>
<div class="abs" style="left:1988.2px;top:419.4px;width:1.2px;height:643px;background:#9c9c9c"></div>
<div class="c" style="left:899px;top:448.70px;line-height:24px;font-weight:bold;color:#217346">1</div>
<div class="c" style="left:899px;top:476.66px;line-height:24px;color:#444">2</div>
<div class="c" style="left:899px;top:504.62px;line-height:24px;color:#444">3</div>
<div class="c" style="left:899px;top:532.57px;line-height:24px;color:#444">4</div>
<div class="c" style="left:899px;top:560.53px;line-height:24px;color:#444">5</div>
<div class="c" style="left:899px;top:588.49px;line-height:24px;color:#444">6</div>
<div class="c" style="left:899px;top:616.45px;line-height:24px;color:#444">7</div>
<div class="c" style="left:899px;top:644.41px;line-height:24px;color:#444">8</div>
<div class="c" style="left:899px;top:672.36px;line-height:24px;color:#444">9</div>
<div class="c" style="left:899px;top:700.32px;line-height:24px;color:#444">10</div>
<div class="c" style="left:899px;top:728.28px;line-height:24px;color:#444">11</div>
<div class="c" style="left:899px;top:756.24px;line-height:24px;color:#444">12</div>
<div class="c" style="left:899px;top:784.20px;line-height:24px;color:#444">13</div>
<div class="c" style="left:899px;top:812.15px;line-height:24px;color:#444">14</div>
<div class="c" style="left:899px;top:840.11px;line-height:24px;color:#444">15</div>
<div class="c" style="left:899px;top:868.07px;line-height:24px;color:#444">16</div>
<div class="c" style="left:899px;top:896.03px;line-height:24px;color:#444">17</div>
<div class="c" style="left:899px;top:923.99px;line-height:24px;color:#444">18</div>
<div class="c" style="left:899px;top:951.94px;line-height:24px;color:#444">19</div>
<div class="c" style="left:899px;top:979.90px;line-height:24px;color:#444">20</div>
<div class="c" style="left:899px;top:1007.86px;line-height:24px;color:#444">21</div>
<div class="c" style="left:899px;top:1035.82px;line-height:24px;color:#444">22</div>
<div class="c" style="left:959.0px;top:449.10px;line-height:24px;font-weight:bold;color:#fff">No.</div>
<div class="c" style="left:1053.6px;top:449.10px;line-height:24px;font-weight:bold;color:#fff">分野</div>
<div class="c" style="left:1291.0px;top:449.10px;line-height:24px;font-weight:bold;color:#fff">リスク/影響内容</div>
<div class="c" style="left:1668.2px;top:449.10px;line-height:24px;font-weight:bold;color:#fff">日本への波及メカニズム</div>
<div class="abs" style="left:1871px;top:447.0px;width:105px;height:26.70px;overflow:hidden"><div class="t" style="left:1.6px;top:2.1px;line-height:24px;font-weight:bold;color:#fff">間軸（短期</div></div>
<div class="abs" style="left:1976px;top:447.0px;width:12.2px;height:26.70px;overflow:hidden"><div class="t" style="left:1.6px;top:2.1px;line-height:24px;font-weight:bold;color:#fff">間軸</div></div>
<div class="t" style="right:1061.8px;top:477.21px;line-height:24px">1</div>
<div class="t" style="left:993.0px;top:477.21px;line-height:24px">エネルギー</div>
<div class="abs" style="left:1117.3px;top:475.06px;width:347.6px;height:26.56px;overflow:hidden"><div class="t" style="left:1.8px;top:2.15px;line-height:24px">ホルムズ海峡閉鎖による原油供給途絶</div></div>
<div class="abs" style="left:1466.2px;top:475.06px;width:404.5px;height:26.56px;overflow:hidden"><div class="t" style="left:1.8px;top:2.15px;line-height:24px">イランがホルムズ海峡を閉鎖すると世界の石油</div></div>
<div class="t" style="left:1873.2px;top:477.21px;line-height:24px">1-4週</div>
<div class="abs" style="left:1976.7px;top:475.06px;width:11.4px;height:26.56px;overflow:hidden"><div class="t" style="left:1.6px;top:2.15px;line-height:24px">1-4週</div></div>
<div class="t" style="right:1061.8px;top:505.17px;line-height:24px">2</div>
<div class="t" style="left:993.0px;top:505.17px;line-height:24px">エネルギー</div>
<div class="abs" style="left:1117.3px;top:503.02px;width:347.6px;height:26.56px;overflow:hidden"><div class="t" style="left:1.8px;top:2.15px;line-height:24px">LNG供給不安と価格高騰</div></div>
<div class="abs" style="left:1466.2px;top:503.02px;width:404.5px;height:26.56px;overflow:hidden"><div class="t" style="left:1.8px;top:2.15px;line-height:24px">カタールはLNG輸出大国で日本の主要供給国</div></div>
<div class="t" style="left:1873.2px;top:505.17px;line-height:24px">1-4週</div>
<div class="abs" style="left:1976.7px;top:503.02px;width:11.4px;height:26.56px;overflow:hidden"><div class="t" style="left:1.6px;top:2.15px;line-height:24px">1-4週</div></div>
<div class="t" style="right:1061.8px;top:533.12px;line-height:24px">3</div>
<div class="t" style="left:993.0px;top:533.12px;line-height:24px">物流</div>
<div class="abs" style="left:1117.3px;top:530.97px;width:347.6px;height:26.56px;overflow:hidden"><div class="t" style="left:1.8px;top:2.15px;line-height:24px">中東経由航空便の運休・大幅遅延</div></div>
<div class="abs" style="left:1466.2px;top:530.97px;width:404.5px;height:26.56px;overflow:hidden"><div class="t" style="left:1.8px;top:2.15px;line-height:24px">UAE、カタール等の主要ハブ空港閉鎖により</div></div>
<div class="t" style="left:1873.2px;top:533.12px;line-height:24px">1-4週</div>
<div class="abs" style="left:1976.7px;top:530.97px;width:11.4px;height:26.56px;overflow:hidden"><div class="t" style="left:1.6px;top:2.15px;line-height:24px">1-4週</div></div>
<div class="t" style="right:1061.8px;top:561.08px;line-height:24px">4</div>
<div class="t" style="left:993.0px;top:561.08px;line-height:24px">物流</div>
<div class="abs" style="left:1117.3px;top:558.93px;width:347.6px;height:26.56px;overflow:hidden"><div class="t" style="left:1.8px;top:2.15px;line-height:24px">海上輸送ルート変更によるコスト増</div></div>
<div class="abs" style="left:1466.2px;top:558.93px;width:404.5px;height:26.56px;overflow:hidden"><div class="t" style="left:1.8px;top:2.15px;line-height:24px">ホルムズ海峡回避で喜望峰経由等の迂回ルー</div></div>
<div class="t" style="left:1873.2px;top:561.08px;line-height:24px">1-4週</div>
<div class="abs" style="left:1976.7px;top:558.93px;width:11.4px;height:26.56px;overflow:hidden"><div class="t" style="left:1.6px;top:2.15px;line-height:24px">1-4週</div></div>
<div class="t" style="right:1061.8px;top:589.04px;line-height:24px">5</div>
<div class="t" style="left:993.0px;top:589.04px;line-height:24px">金融</div>
<div class="abs" style="left:1117.3px;top:586.89px;width:347.6px;height:26.56px;overflow:hidden"><div class="t" style="left:1.8px;top:2.15px;line-height:24px">株価下落と市場不安定化</div></div>
<div class="abs" style="left:1466.2px;top:586.89px;width:404.5px;height:26.56px;overflow:hidden"><div class="t" style="left:1.8px;top:2.15px;line-height:24px">地政学リスク上昇で投資家がリスク回避。日</div></div>
<div class="t" style="left:1873.2px;top:589.04px;line-height:24px">1-4週</div>
<div class="abs" style="left:1976.7px;top:586.89px;width:11.4px;height:26.56px;overflow:hidden"><div class="t" style="left:1.6px;top:2.15px;line-height:24px">1-4週</div></div>
<div class="t" style="right:1061.8px;top:617.00px;line-height:24px">6</div>
<div class="t" style="left:993.0px;top:617.00px;line-height:24px">金融</div>
<div class="abs" style="left:1117.3px;top:614.85px;width:347.6px;height:26.56px;overflow:hidden"><div class="t" style="left:1.8px;top:2.15px;line-height:24px">原油価格高騰によるインフレ再燃</div></div>
<div class="abs" style="left:1466.2px;top:614.85px;width:404.5px;height:26.56px;overflow:hidden"><div class="t" style="left:1.8px;top:2.15px;line-height:24px">原油価格上昇が輸送コスト、電力料金等に波</div></div>
<div class="t" style="left:1873.2px;top:617.00px;line-height:24px">1-4週</div>
<div class="abs" style="left:1976.7px;top:614.85px;width:11.4px;height:26.56px;overflow:hidden"><div class="t" style="left:1.6px;top:2.15px;line-height:24px">1-4週</div></div>
<div class="t" style="right:1061.8px;top:644.96px;line-height:24px">7</div>
<div class="t" style="left:993.0px;top:644.96px;line-height:24px">金融</div>
<div class="abs" style="left:1117.3px;top:642.81px;width:347.6px;height:26.56px;overflow:hidden"><div class="t" style="left:1.8px;top:2.15px;line-height:24px">円高圧力と輸出企業の業績悪化</div></div>
<div class="abs" style="left:1466.2px;top:642.81px;width:404.5px;height:26.56px;overflow:hidden"><div class="t" style="left:1.8px;top:2.15px;line-height:24px">リスク回避の円買いで急激な円高。輸出企業</div></div>
<div class="t" style="left:1873.2px;top:644.96px;line-height:24px">1-4週</div>
<div class="abs" style="left:1976.7px;top:642.81px;width:11.4px;height:26.56px;overflow:hidden"><div class="t" style="left:1.6px;top:2.15px;line-height:24px">1-4週</div></div>
<div class="t" style="right:1061.8px;top:672.91px;line-height:24px">8</div>
<div class="t" style="left:993.0px;top:672.91px;line-height:24px">産業</div>
<div class="abs" style="left:1117.3px;top:670.76px;width:347.6px;height:26.56px;overflow:hidden"><div class="t" style="left:1.8px;top:2.15px;line-height:24px">サプライチェーンの混乱</div></div>
<div class="abs" style="left:1466.2px;top:670.76px;width:404.5px;height:26.56px;overflow:hidden"><div class="t" style="left:1.8px;top:2.15px;line-height:24px">物流遅延、原材料価格高騰で製造業のサプラ</div></div>
<div class="t" style="left:1873.2px;top:672.91px;line-height:24px">1-4週</div>
<div class="abs" style="left:1976.7px;top:670.76px;width:11.4px;height:26.56px;overflow:hidden"><div class="t" style="left:1.6px;top:2.15px;line-height:24px">1-4週</div></div>
<div class="t" style="right:1061.8px;top:700.87px;line-height:24px">9</div>
<div class="t" style="left:993.0px;top:700.87px;line-height:24px">産業</div>
<div class="abs" style="left:1117.3px;top:698.72px;width:347.6px;height:26.56px;overflow:hidden"><div class="t" style="left:1.8px;top:2.15px;line-height:24px">中東プロジェクトの中断・延期</div></div>
<div class="abs" style="left:1466.2px;top:698.72px;width:404.5px;height:26.56px;overflow:hidden"><div class="t" style="left:1.8px;top:2.15px;line-height:24px">湾岸諸国でのインフラ・エネルギープロジェ</div></div>
<div class="t" style="left:1873.2px;top:700.87px;line-height:24px">1-4週</div>
<div class="abs" style="left:1976.7px;top:698.72px;width:11.4px;height:26.56px;overflow:hidden"><div class="t" style="left:1.6px;top:2.15px;line-height:24px">1-4週</div></div>
<div class="t" style="right:1061.8px;top:728.83px;line-height:24px">10</div>
<div class="t" style="left:993.0px;top:728.83px;line-height:24px">外交</div>
<div class="abs" style="left:1117.3px;top:726.68px;width:347.6px;height:26.56px;overflow:hidden"><div class="t" style="left:1.8px;top:2.15px;line-height:24px">日米同盟への協力要請圧力</div></div>
<div class="abs" style="left:1466.2px;top:726.68px;width:404.5px;height:26.56px;overflow:hidden"><div class="t" style="left:1.8px;top:2.15px;line-height:24px">米国から自衛隊派遣、後方支援、経済制裁へ</div></div>
<div class="t" style="left:1873.2px;top:728.83px;line-height:24px">1-4週</div>
<div class="abs" style="left:1976.7px;top:726.68px;width:11.4px;height:26.56px;overflow:hidden"><div class="t" style="left:1.6px;top:2.15px;line-height:24px">1-4週</div></div>
<div class="t" style="right:1061.8px;top:756.79px;line-height:24px">11</div>
<div class="t" style="left:993.0px;top:756.79px;line-height:24px">外交</div>
<div class="abs" style="left:1117.3px;top:754.64px;width:347.6px;height:26.56px;overflow:hidden"><div class="t" style="left:1.8px;top:2.15px;line-height:24px">中東諸国との関係悪化</div></div>
<div class="abs" style="left:1466.2px;top:754.64px;width:404.5px;height:26.56px;overflow:hidden"><div class="t" style="left:1.8px;top:2.15px;line-height:24px">米国支持の姿勢をとれば、イランやアラブ諸</div></div>
<div class="t" style="left:1873.2px;top:756.79px;line-height:24px">1-4週</div>
<div class="abs" style="left:1976.7px;top:754.64px;width:11.4px;height:26.56px;overflow:hidden"><div class="t" style="left:1.6px;top:2.15px;line-height:24px">1-4週</div></div>
<div class="t" style="right:1061.8px;top:784.75px;line-height:24px">12</div>
<div class="t" style="left:993.0px;top:784.75px;line-height:24px">安全保障</div>
<div class="abs" style="left:1117.3px;top:782.60px;width:347.6px;height:26.56px;overflow:hidden"><div class="t" style="left:1.8px;top:2.15px;line-height:24px">テロ・サイバー攻撃のリスク上昇</div></div>
<div class="abs" style="left:1466.2px;top:782.60px;width:404.5px;height:26.56px;overflow:hidden"><div class="t" style="left:1.8px;top:2.15px;line-height:24px">イラン系組織やプロキシによる報復攻撃が米</div></div>
<div class="t" style="left:1873.2px;top:784.75px;line-height:24px">1-4週</div>
<div class="abs" style="left:1976.7px;top:782.60px;width:11.4px;height:26.56px;overflow:hidden"><div class="t" style="left:1.6px;top:2.15px;line-height:24px">1-4週</div></div>
<div class="t" style="right:1061.8px;top:812.70px;line-height:24px">13</div>
<div class="t" style="left:993.0px;top:812.70px;line-height:24px">安全保障</div>
<div class="abs" style="left:1117.3px;top:810.55px;width:347.6px;height:26.56px;overflow:hidden"><div class="t" style="left:1.8px;top:2.15px;line-height:24px">在日米軍基地への攻撃リスク</div></div>
<div class="abs" style="left:1466.2px;top:810.55px;width:404.5px;height:26.56px;overflow:hidden"><div class="t" style="left:1.8px;top:2.15px;line-height:24px">イラン報復の標的に在日米軍施設が含まれる</div></div>
<div class="t" style="left:1873.2px;top:812.70px;line-height:24px">1-4週</div>
<div class="abs" style="left:1976.7px;top:810.55px;width:11.4px;height:26.56px;overflow:hidden"><div class="t" style="left:1.6px;top:2.15px;line-height:24px">1-4週</div></div>
<div class="t" style="right:1061.8px;top:840.66px;line-height:24px">14</div>
<div class="t" style="left:993.0px;top:840.66px;line-height:24px">邦人安全</div>
<div class="abs" style="left:1117.3px;top:838.51px;width:347.6px;height:26.56px;overflow:hidden"><div class="t" style="left:1.8px;top:2.15px;line-height:24px">中東在留邦人の安全確保</div></div>
<div class="abs" style="left:1466.2px;top:838.51px;width:404.5px;height:26.56px;overflow:hidden"><div class="t" style="left:1.8px;top:2.15px;line-height:24px">UAE、カタール、サウジ等に約8,000名の邦人</div></div>
<div class="t" style="left:1873.2px;top:840.66px;line-height:24px">1-4週</div>
<div class="abs" style="left:1976.7px;top:838.51px;width:11.4px;height:26.56px;overflow:hidden"><div class="t" style="left:1.6px;top:2.15px;line-height:24px">1-4週</div></div>
<div class="t" style="right:1061.8px;top:868.62px;line-height:24px">15</div>
<div class="t" style="left:993.0px;top:868.62px;line-height:24px">邦人安全</div>
<div class="abs" style="left:1117.3px;top:866.47px;width:347.6px;height:26.56px;overflow:hidden"><div class="t" style="left:1.8px;top:2.15px;line-height:24px">中東渡航・ビジネスの制限</div></div>
<div class="abs" style="left:1466.2px;top:866.47px;width:404.5px;height:26.56px;overflow:hidden"><div class="t" style="left:1.8px;top:2.15px;line-height:24px">危険情報レベル引き上げで渡航自粛、出張禁</div></div>
<div class="t" style="left:1873.2px;top:868.62px;line-height:24px">1-4週</div>
<div class="abs" style="left:1976.7px;top:866.47px;width:11.4px;height:26.56px;overflow:hidden"><div class="t" style="left:1.6px;top:2.15px;line-height:24px">1-4週</div></div>
<div class="t" style="right:1061.8px;top:896.58px;line-height:24px">16</div>
<div class="t" style="left:993.0px;top:896.58px;line-height:24px">サイバー</div>
<div class="abs" style="left:1117.3px;top:894.43px;width:347.6px;height:26.56px;overflow:hidden"><div class="t" style="left:1.8px;top:2.15px;line-height:24px">重要インフラへのサイバー攻撃</div></div>
<div class="abs" style="left:1466.2px;top:894.43px;width:404.5px;height:26.56px;overflow:hidden"><div class="t" style="left:1.8px;top:2.15px;line-height:24px">イラン系ハッカー集団による電力、金融、通</div></div>
<div class="t" style="left:1873.2px;top:896.58px;line-height:24px">1-4週</div>
<div class="abs" style="left:1976.7px;top:894.43px;width:11.4px;height:26.56px;overflow:hidden"><div class="t" style="left:1.6px;top:2.15px;line-height:24px">1-4週</div></div>
<div class="t" style="right:1061.8px;top:924.54px;line-height:24px">17</div>
<div class="t" style="left:993.0px;top:924.54px;line-height:24px">サイバー</div>
<div class="abs" style="left:1117.3px;top:922.39px;width:347.6px;height:26.56px;overflow:hidden"><div class="t" style="left:1.8px;top:2.15px;line-height:24px">企業・政府機関への標的型攻撃</div></div>
<div class="abs" style="left:1466.2px;top:922.39px;width:404.5px;height:26.56px;overflow:hidden"><div class="t" style="left:1.8px;top:2.15px;line-height:24px">情報窃取、業務妨害を目的とした高度な標的</div></div>
<div class="t" style="left:1873.2px;top:924.54px;line-height:24px">1-4週</div>
<div class="abs" style="left:1976.7px;top:922.39px;width:11.4px;height:26.56px;overflow:hidden"><div class="t" style="left:1.6px;top:2.15px;line-height:24px">1-4週</div></div>
<div class="t" style="right:1061.8px;top:952.49px;line-height:24px">18</div>
<div class="t" style="left:993.0px;top:952.49px;line-height:24px">社会</div>
<div class="abs" style="left:1117.3px;top:950.34px;width:347.6px;height:26.56px;overflow:hidden"><div class="t" style="left:1.8px;top:2.15px;line-height:24px">国内世論の分断</div></div>
<div class="abs" style="left:1466.2px;top:950.34px;width:404.5px;height:26.56px;overflow:hidden"><div class="t" style="left:1.8px;top:2.15px;line-height:24px">米国支持vs慎重論で世論が分断。政権運営へ</div></div>
<div class="t" style="left:1873.2px;top:952.49px;line-height:24px">1-4週</div>
<div class="abs" style="left:1976.7px;top:950.34px;width:11.4px;height:26.56px;overflow:hidden"><div class="t" style="left:1.6px;top:2.15px;line-height:24px">1-4週</div></div>
<div class="t" style="right:1061.8px;top:980.45px;line-height:24px">19</div>
<div class="t" style="left:993.0px;top:980.45px;line-height:24px">社会</div>
<div class="abs" style="left:1117.3px;top:978.30px;width:347.6px;height:26.56px;overflow:hidden"><div class="t" style="left:1.8px;top:2.15px;line-height:24px">生活コストの上昇（燃料・電力料金）</div></div>
<div class="abs" style="left:1466.2px;top:978.30px;width:404.5px;height:26.56px;overflow:hidden"><div class="t" style="left:1.8px;top:2.15px;line-height:24px">エネルギー価格高騰が家計の光熱費、ガソリ</div></div>
<div class="t" style="left:1873.2px;top:980.45px;line-height:24px">1-4週</div>
<div class="abs" style="left:1976.7px;top:978.30px;width:11.4px;height:26.56px;overflow:hidden"><div class="t" style="left:1.6px;top:2.15px;line-height:24px">1-4週</div></div>
<div class="t" style="right:1061.8px;top:1008.41px;line-height:24px">20</div>
<div class="t" style="left:993.0px;top:1008.41px;line-height:24px">社会</div>
<div class="abs" style="left:1117.3px;top:1006.26px;width:347.6px;height:26.56px;overflow:hidden"><div class="t" style="left:1.8px;top:2.15px;line-height:24px">中東系コミュニティへの偏見・差別</div></div>
<div class="abs" style="left:1466.2px;top:1006.26px;width:404.5px;height:26.56px;overflow:hidden"><div class="t" style="left:1.8px;top:2.15px;line-height:24px">事態悪化で在日イラン人等への偏見、ヘイト</div></div>
<div class="t" style="left:1873.2px;top:1008.41px;line-height:24px">1-4週</div>
<div class="abs" style="left:1976.7px;top:1006.26px;width:11.4px;height:26.56px;overflow:hidden"><div class="t" style="left:1.6px;top:2.15px;line-height:24px">1-4週</div></div>
<div class="abs" style="left:925.7px;top:444.7px;width:66.4px;height:31.6px;border:2.4px solid #217346"></div>
<div class="abs" style="left:986.4px;top:470.4px;width:7.6px;height:7.6px;background:#217346;border:1px solid #fff"></div>
</div>
<div class="abs" style="left:1993.4px;top:419px;width:20.8px;height:644px;background:#ececec"></div>
<div class="abs" style="left:1993.6px;top:419.8px;width:20.8px;height:20.4px;background:#fff;border:1.2px solid #bdbdbd;border-radius:2px"></div>
<svg style="left:1999.4px;top:426.6px" width="9.2" height="5.6" viewBox="0 0 9.2 5.6"><path d="M0 5.6 H9.2 L4.6 0Z" fill="#6f6f6f"/></svg>
<div class="abs" style="left:1993.6px;top:440.4px;width:20.8px;height:13.6px;background:#fff;border:1.2px solid #bdbdbd;border-radius:2px"></div>
<div class="abs" style="left:1993.6px;top:1042.6px;width:20.8px;height:20.4px;background:#fff;border:1.2px solid #bdbdbd;border-radius:2px"></div>
<svg style="left:1999.4px;top:1050.2px" width="9.2" height="5.6" viewBox="0 0 9.2 5.6"><path d="M0 0 H9.2 L4.6 5.6Z" fill="#6f6f6f"/></svg>
<!-- sheet tabs -->
<div class="abs" style="left:872px;top:1063.6px;width:1147px;height:40px;background:#f5f6f8"></div>
<div class="abs" style="left:872px;top:1063.6px;width:1147px;height:1.2px;background:#cfcfcf"></div>
<svg style="left:908.2px;top:1079.4px" width="6" height="10" viewBox="0 0 6 10"><path d="M6 0 V10 L0 5Z" fill="#cfcfcf"/></svg>
<svg style="left:949px;top:1079.4px" width="6" height="10" viewBox="0 0 6 10"><path d="M0 0 V10 L6 5Z" fill="#217346"/></svg>
<svg style="left:971.6px;top:1076px" width="21" height="17" viewBox="0 0 21 17" stroke="#217346" stroke-width="2.2"><path d="M0 1.3 H21M0 8.5 H21M0 15.5 H21"/></svg>
<div class="abs" style="left:1031.6px;top:1069px;width:1.3px;height:28px;background:#bdbdbd"></div>
<div class="t" style="left:1050.2px;top:1072px;font-size:18.5px;line-height:20px;color:#555" id="tab1">①サマリー</div>
<div class="abs" style="left:1160.6px;top:1064px;width:149px;height:35px;background:#fff;border-left:1.2px solid #c4c4c4"></div>
<div class="abs" style="left:1160.6px;top:1095.4px;width:149px;height:2.6px;background:#217346"></div>
<div class="abs" style="left:1160.6px;top:1064px;width:148.6px;height:31px;overflow:hidden"><div class="t" style="left:17.6px;top:8px;font-size:18px;line-height:20px;color:#217346;font-weight:bold;letter-spacing:0.5px" id="tab2">②影響一覧（リスク</div></div>
<svg style="left:1323.2px;top:1082.2px" width="16" height="4" viewBox="0 0 16 4" fill="#217346"><circle cx="1.8" cy="2" r="1.6"/><circle cx="7.8" cy="2" r="1.6"/><circle cx="13.8" cy="2" r="1.6"/></svg>
<svg style="left:1357.4px;top:1072.4px" width="22" height="22" viewBox="0 0 22 22" fill="none" stroke="#666" stroke-width="1.9"><circle cx="11" cy="11" r="9.6"/><path d="M11 5.2 V16.8M5.2 11 H16.8" stroke-width="2.3"/></svg>
<svg style="left:1409px;top:1075px" width="3" height="17" viewBox="0 0 3 17" fill="#a6a6a6"><circle cx="1.5" cy="2" r="1.45"/><circle cx="1.5" cy="8.5" r="1.45"/><circle cx="1.5" cy="15" r="1.45"/></svg>
<div class="abs" style="left:1430px;top:1074.2px;width:558px;height:20px;background:#ebebeb"></div>
<div class="abs" style="left:1430.2px;top:1074.2px;width:20.6px;height:19.8px;background:#fff;border:1.2px solid #bdbdbd;border-radius:2px"></div>
<svg style="left:1437.6px;top:1079.6px" width="5.6" height="9.2" viewBox="0 0 5.6 9.2"><path d="M5.6 0 V9.2 L0 4.6Z" fill="#6f6f6f"/></svg>
<div class="abs" style="left:1451px;top:1074.2px;width:13.6px;height:19.8px;background:#fff;border:1.2px solid #bdbdbd;border-radius:2px"></div>
<div class="abs" style="left:1967.6px;top:1074.2px;width:20.6px;height:19.8px;background:#fff;border:1.2px solid #bdbdbd;border-radius:2px"></div>
<svg style="left:1975.6px;top:1079.6px" width="5.6" height="9.2" viewBox="0 0 5.6 9.2"><path d="M0 0 V9.2 L5.6 4.6Z" fill="#6f6f6f"/></svg>
<!-- status -->
<div class="abs" style="left:872px;top:1103px;width:1147px;height:31px;background:#217346"></div>
<div class="t" style="left:886.4px;top:1110.6px;font-size:15.2px;line-height:16px;color:#fff;-webkit-text-stroke:0.5px #fff;letter-spacing:-0.15px">Ready</div>
<svg style="left:1728px;top:1111px" width="220" height="16" viewBox="0 0 220 16" fill="none" stroke="#fff"><path d="M0.6 8 H16.2" stroke-width="1.4"/><path d="M25 8 H191.4" stroke-width="1.2"/><rect x="105.6" y="1" width="6" height="14" fill="#fff" stroke="none"/><path d="M202 8 H217.8M209.9 0.2 V15.8" stroke-width="1.4"/></svg>
<div class="t" style="left:1962px;top:1110.6px;font-size:15.2px;line-height:16px;color:#fff;-webkit-text-stroke:0.5px #fff;letter-spacing:-0.3px">100%</div>
<!-- GRIDGEN-END -->
</div></div>

</div>
</body>
</html>
